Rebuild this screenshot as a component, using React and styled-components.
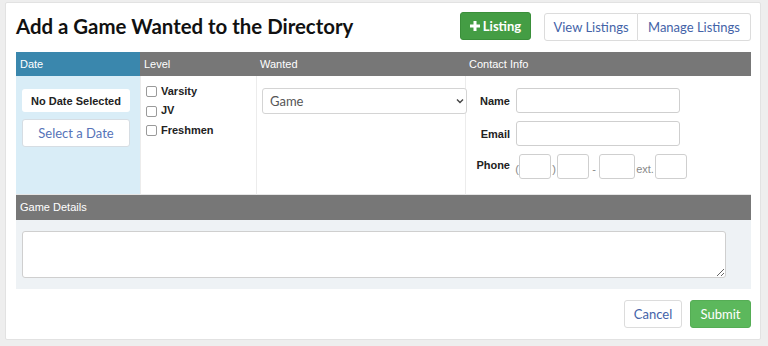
import React from "react";
import styled, { createGlobalStyle } from "styled-components";

const Global = createGlobalStyle`
  html, body { margin: 0; padding: 0; background: #eeeeee; }
  * { box-sizing: border-box; }
`;

const UI_FONT = `"Lato", "Open Sans", sans-serif`;

const Page = styled.div`
  padding: 2px 7px 6px 5px;
  width: 768px;
  height: 346px;
`;

const Panel = styled.div`
  background: #fff;
  border: 1px solid #e2e2e2;
  border-radius: 2px;
  height: 338px;
  padding: 9px 9px 10px 10px;
  display: flex;
  flex-direction: column;
`;

const Header = styled.div`
  display: flex;
  align-items: flex-start;
  height: 40px;
`;

const Title = styled.h1`
  margin: 0;
  flex: 1;
  font-family: ${UI_FONT};
  font-weight: 700;
  font-size: 20.4px;
  line-height: 28px;
  color: #111;
`;

const Btn = styled.button`
  font-family: ${UI_FONT};
  font-size: 13px;
  height: 28px;
  padding: 0;
  border-radius: 3px;
  cursor: pointer;
  white-space: nowrap;
  display: inline-flex;
  align-items: center;
  justify-content: center;
  gap: 3px;
  border: 1px solid ${(p) => (p.$variant === "green" ? "#3a8f3a" : p.$variant === "submit" ? "#55ad55" : "#dcdcdc")};
  background: ${(p) => (p.$variant === "green" ? "#449d44" : p.$variant === "submit" ? "#5cb85c" : "#fff")};
  color: ${(p) => (p.$variant ? "#fff" : "#4463a8")};
  font-weight: ${(p) => (p.$variant === "green" ? 700 : 400)};
  & > svg { flex-shrink: 0; }
`;

const Group = styled.div`
  display: flex;
  margin-left: 13px;
  margin-top: 1px;
  & > button { border-radius: 0; }
  & > button:first-child { border-radius: 3px 0 0 3px; }
  & > button:last-child { border-radius: 0 3px 3px 0; border-left: none; }
`;

const Table = styled.div`
  display: grid;
  grid-template-columns: 124px 116px 209px 286px;
  font-family: "Liberation Sans", Arial, sans-serif;
`;

const HeadCell = styled.div`
  height: 24px;
  background: ${(p) => (p.$blue ? "#3a87ad" : "#777777")};
  color: #fff;
  font-size: 11px;
  line-height: 24px;
  padding-left: 4px;
`;

const Cell = styled.div`
  height: 119px;
  background: ${(p) => (p.$blue ? "#d9edf7" : "#fff")};
  border-bottom: 1px solid #e6e6e6;
  border-left: ${(p) => (p.$first ? "none" : "1px solid #ececec")};
  padding: ${(p) => p.$pad || "0"};
  display: flex;
  flex-direction: column;
`;

const DateBox = styled.div`
  width: 108px;
  height: 23px;
  background: #fff;
  border-radius: 3px;
  font-size: 11px;
  font-weight: 700;
  color: #222;
  display: flex;
  align-items: center;
  justify-content: center;
`;

const DateBtn = styled.button`
  margin-top: 7px;
  width: 108px;
  height: 28px;
  background: #fff;
  border: 1px solid #d6dde3;
  border-radius: 3px;
  font-family: ${UI_FONT};
  font-size: 13px;
  color: #5673b8;
`;

const CheckRow = styled.label`
  display: flex;
  align-items: center;
  height: 19.5px;
  font-size: 11px;
  font-weight: 700;
  color: #222;
`;

const Check = styled.input`
  appearance: none;
  -webkit-appearance: none;
  width: 11px;
  height: 11px;
  margin: 0 4px 0 0;
  border: 1px solid #9a9a9a;
  border-radius: 2px;
  background: #fff;
  position: relative;
  top: 1px;
`;

const SelectWrap = styled.div`
  position: relative;
  width: 205px;
  height: 26px;
  z-index: 1;
`;

const Select = styled.select`
  appearance: none;
  width: 100%;
  height: 100%;
  border: 1px solid #d4d4d4;
  border-radius: 3px;
  background: #fff;
  font-family: ${UI_FONT};
  font-size: 13px;
  color: #555;
  padding: 0 7px;
`;

const Chevron = styled.svg`
  position: absolute;
  right: 3px;
  top: 10px;
  pointer-events: none;
`;

const ContactGrid = styled.div`
  display: grid;
  grid-template-columns: 34px auto;
  column-gap: 6px;
  row-gap: 8px;
  align-items: center;
`;

const Label = styled.div`
  font-size: 11px;
  font-weight: 700;
  color: #222;
  text-align: right;
  white-space: nowrap;
  line-height: 14px;
  transform: translateY(${(p) => p.$dy || 0}px);
`;

const Input = styled.input`
  width: ${(p) => p.$w || 164}px;
  height: 25px;
  border: 1px solid #cfcfcf;
  border-radius: 3px;
  background: #fff;
  margin: 0;
  padding: 0 4px;
`;

const PhoneRow = styled.div`
  display: flex;
  align-items: center;
  font-size: 11px;
  color: #888;
  margin-left: -1px;
`;

const Sep = styled.span`
  display: inline-block;
  width: ${(p) => p.$w}px;
  text-align: center;
  line-height: 11px;
  padding-top: 6px;
`;

const DetailsHead = styled.div`
  height: 25px;
  background: #777;
  color: #fff;
  font-family: "Liberation Sans", Arial, sans-serif;
  font-size: 11px;
  line-height: 25px;
  padding-left: 4px;
`;

const DetailsBody = styled.div`
  background: #eef2f5;
  padding: 11px 25px 11px 6px;
`;

const TextArea = styled.textarea`
  display: block;
  width: 704px;
  height: 47px;
  border: 1px solid #cfcfcf;
  border-radius: 3px;
  background: #fff;
  margin: 0;
  resize: both;
`;

const Footer = styled.div`
  display: flex;
  justify-content: flex-end;
  gap: 8px;
  margin-top: 11px;
`;

export default function App() {
  return (
    <Page>
      <Global />
      <Panel>
        <Header>
          <Title>Add a Game Wanted to the Directory</Title>
          <Btn $variant="green" style={{ width: 71 }}>
            <svg width="10" height="10" viewBox="0 0 10 10">
              <rect x="3.5" y="0" width="3" height="10" fill="#fff" />
              <rect x="0" y="3.5" width="10" height="3" fill="#fff" />
            </svg>
            Listing
          </Btn>
          <Group>
            <Btn style={{ width: 94 }}>View Listings</Btn>
            <Btn style={{ width: 113 }}>Manage Listings</Btn>
          </Group>
        </Header>
        <Table>
          <HeadCell $blue>Date</HeadCell>
          <HeadCell>Level</HeadCell>
          <HeadCell>Wanted</HeadCell>
          <HeadCell>Contact Info</HeadCell>
          <Cell $blue $first $pad="13px 0 0 6px">
            <DateBox>No Date Selected</DateBox>
            <DateBtn>Select a Date</DateBtn>
          </Cell>
          <Cell $pad="5px 0 0 5px">
            <CheckRow><Check type="checkbox" />Varsity</CheckRow>
            <CheckRow><Check type="checkbox" />JV</CheckRow>
            <CheckRow><Check type="checkbox" />Freshmen</CheckRow>
          </Cell>
          <Cell $pad="12px 0 0 5px">
            <SelectWrap>
              <Select defaultValue="Game">
                <option>Game</option>
              </Select>
              <Chevron width="8" height="6" viewBox="0 0 8 6">
                <path d="M1 1.5 L4 4.5 L7 1.5" fill="none" stroke="#444" strokeWidth="1.4" />
              </Chevron>
            </SelectWrap>
          </Cell>
          <Cell $pad="12px 0 0 10px">
            <ContactGrid>
              <Label>Name</Label>
              <Input />
              <Label>Email</Label>
              <Input />
              <Label $dy={-2}>Phone</Label>
              <PhoneRow>
                <Sep $w={4}>(</Sep>
                <Input $w={32} />
                <Sep $w={6}>)</Sep>
                <Input $w={32} />
                <Sep $w={10}>-</Sep>
                <Input $w={36} />
                <Sep $w={20}>ext.</Sep>
                <Input $w={32} />
              </PhoneRow>
            </ContactGrid>
          </Cell>
        </Table>
        <DetailsHead>Game Details</DetailsHead>
        <DetailsBody>
          <TextArea />
        </DetailsBody>
        <Footer>
          <Btn style={{ width: 58 }}>Cancel</Btn>
          <Btn $variant="submit" style={{ width: 61 }}>Submit</Btn>
        </Footer>
      </Panel>
    </Page>
  );
}
